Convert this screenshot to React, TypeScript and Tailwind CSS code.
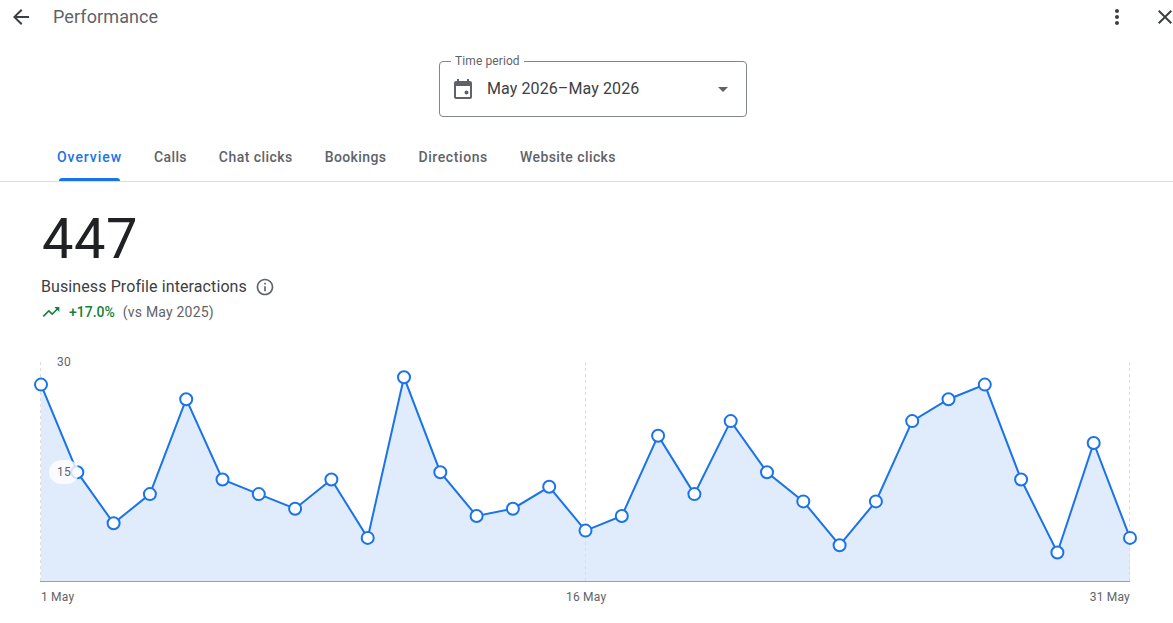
import React from "react";

const values = [27, 15, 8, 12, 25, 14, 12, 10, 14, 6, 28, 15, 9, 10, 13, 7, 9, 20, 12, 22, 15, 11, 5, 11, 22, 25, 27, 14, 4, 19, 6];
const H = 262;
const X0 = 41;
const X1 = 1130;
const Y0 = 227;
const px = (i: number) => X0 + (i * (X1 - X0)) / 30;
const py = (v: number) => Y0 + 0.7 - v * 7.3;
const line = values.map((v, i) => `${px(i).toFixed(1)},${py(v).toFixed(1)}`).join(" ");
const area = `${X0},${Y0} ${line} ${X1},${Y0}`;

function Icon({ d, size = 24, className = "" }: { d: string; size?: number; className?: string }) {
  return (
    <svg width={size} height={size} viewBox="0 0 24 24" fill="currentColor" className={`shrink-0 ${className}`}>
      <path d={d} />
    </svg>
  );
}

const tabs = [
  { label: "Overview", cls: "tracking-[0.95px]" },
  { label: "Calls", cls: "tracking-[0.35px]" },
  { label: "Chat clicks", cls: "tracking-[0.45px]" },
  { label: "Bookings", cls: "tracking-[0.4px]" },
  { label: "Directions", cls: "tracking-[0.6px]" },
  { label: "Website clicks", cls: "tracking-[0.42px]" },
];

export default function App() {
  return (
    <div className="w-full h-[623px] overflow-hidden bg-white font-['Roboto',sans-serif] text-[#3c4043]">
      <header className="flex items-center h-[34px] relative">
        <Icon className="ml-[9px] text-[#3c4043]" d="M20 11H7.83l5.59-5.59L12 4l-8 8 8 8 1.41-1.41L7.83 13H20v-2z" />
        <h1 className="ml-[20px] text-[18px] leading-[24px] mt-[-1px] text-[#5f6368] tracking-[0.1px]">Performance</h1>
        <div className="flex-1" />
        <Icon className="text-[#3c4043] mr-[24px]" d="M12 8c1.1 0 2-.9 2-2s-.9-2-2-2-2 .9-2 2 .9 2 2 2zm0 2c-1.1 0-2 .9-2 2s.9 2 2 2 2-.9 2-2-.9-2-2-2zm0 6c-1.1 0-2 .9-2 2s.9 2 2 2 2-.9 2-2-.9-2-2-2z" />
        <Icon className="text-[#3c4043] mr-[-4px]" d="M19 6.41 17.59 5 12 10.59 6.41 5 5 6.41 10.59 12 5 17.59 6.41 19 12 13.41 17.59 19 19 17.59 13.41 12z" />
      </header>

      <div className="flex justify-center mt-[27px]">
        <div className="relative w-[308px] h-[56px] border border-[#80868b] rounded-[4px] flex items-center pl-[11px] pr-[11px] ml-[13px]">
          <span className="absolute left-[11px] top-[-9px] bg-white px-[4px] text-[12px] leading-[16px] tracking-[0.1px] text-[#5f6368]">Time period</span>
          <Icon className="text-[#5f6368]" d="M19 4h-1V2h-2v2H8V2H6v2H5c-1.1 0-2 .9-2 2v14c0 1.1.9 2 2 2h14c1.1 0 2-.9 2-2V6c0-1.1-.9-2-2-2zm0 16H5V9h14v11zM13.5 15.5a2 2 0 1 0 4 0 2 2 0 1 0-4 0z" />
          <span className="ml-[12px] text-[16px] tracking-[0.1px] text-[#3c4043] flex-1">May 2026–May 2026</span>
          <Icon className="text-[#5f6368]" d="M7 10l5 5 5-5z" />
        </div>
      </div>

      <nav className="flex h-[65px] pl-[41px] border-b border-[#dadce0]">
        {tabs.map((t, i) => (
          <div key={t.label} className="relative px-[16px] pt-[17px] flex items-center justify-center h-full">
            <span className={`text-[14px] font-medium ${t.cls} ${i === 0 ? "text-[#1a73e8]" : "text-[#5f6368]"}`}>{t.label}</span>
            {i === 0 && <span className="absolute left-[18px] right-[18px] bottom-0 h-[3px] bg-[#1a73e8] rounded-t-[3px]" />}
          </div>
        ))}
      </nav>

      <section className="pl-[41px] pt-[25px]">
        <div className="text-[56px] leading-[64px] tracking-[0.5px] pl-[1px] text-[#202124]">447</div>
        <div className="flex items-center mt-[4px] h-[24px]">
          <span className="text-[16px] tracking-[0.1px] text-[#3c4043]">Business Profile interactions</span>
          <Icon className="ml-[8px] text-[#5f6368]" size={20} d="M11 7h2v2h-2zm0 4h2v6h-2zm1-9C6.48 2 2 6.48 2 12s4.48 10 10 10 10-4.48 10-10S17.52 2 12 2zm0 18c-4.41 0-8-3.59-8-8s3.59-8 8-8 8 3.59 8 8-3.59 8-8 8z" />
        </div>
        <div className="flex items-center mt-[3px] h-[20px] text-[14px]">
          <Icon className="text-[#188038]" size={20} d="M16 6l2.29 2.29-4.88 4.88-4-4L2 16.59 3.41 18l6-6 4 4 6.3-6.29L22 12V6z" />
          <span className="ml-[8px] font-medium text-[#188038]">+17.0%</span>
          <span className="ml-[8px] text-[#5f6368] tracking-[0.2px]">(vs May 2025)</span>
        </div>
      </section>

      <div className="relative mt-[32px] h-[262px]">
        <svg width="1173" height={H} viewBox={`0 0 1173 ${H}`} className="block">
          <polygon points={area} fill="#e0ecfb" />
          {[40.5, 585.5, 1129.5].map((x) => (
            <line key={x} x1={x} x2={x} y1={8} y2={Y0} stroke="#dadce0" strokeDasharray="3 3" />
          ))}
          <line x1={X0 - 1} x2={X1} y1={Y0 + 0.5} y2={Y0 + 0.5} stroke="#9aa0a6" />
          <polyline points={line} fill="none" stroke="#1a73e8" strokeWidth="2" />
          {values.map((v, i) => (
            <circle key={i} cx={px(i)} cy={py(v)} r="6" fill="#fff" stroke="#1a73e8" strokeWidth="2" />
          ))}
        </svg>
        <span className="absolute left-[57px] top-0 text-[12px] leading-[16px] tracking-[0.2px] text-[#5f6368]">30</span>
        <span className="absolute left-[49px] top-[106px] w-[30px] h-[24px] rounded-full bg-white/80 text-[12px] leading-[24px] pl-[8px] tracking-[0.2px] text-[#5f6368]">15</span>
        <span className="absolute left-[41px] top-[235px] text-[12px] leading-[16px] tracking-[0.2px] text-[#5f6368]">1 May</span>
        <span className="absolute left-[566px] top-[235px] text-[12px] leading-[16px] tracking-[0.2px] text-[#5f6368]">16 May</span>
        <span className="absolute right-[43px] top-[235px] text-[12px] leading-[16px] tracking-[0.2px] text-[#5f6368]">31 May</span>
      </div>
    </div>
  );
}
